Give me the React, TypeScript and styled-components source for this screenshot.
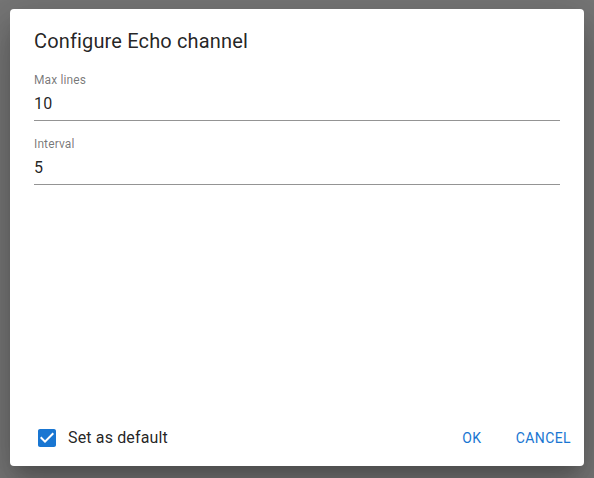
import React, { useState } from "react";
import styled, { createGlobalStyle } from "styled-components";

const Global = createGlobalStyle`
  html, body { margin: 0; padding: 0; }
  body {
    background: #767676;
    font-family: Roboto, "Liberation Sans", Arial, sans-serif;
    -webkit-font-smoothing: antialiased;
  }
  * { box-sizing: border-box; }
`;

const Backdrop = styled.div`
  width: 594px;
  height: 478px;
  padding: 9px 10px 12px 10px;
  display: flex;
`;

const Dialog = styled.div`
  flex: 1;
  background: #fff;
  border-radius: 4px;
  display: flex;
  flex-direction: column;
  box-shadow: 0px 11px 15px -7px rgba(0,0,0,0.2), 0px 24px 38px 3px rgba(0,0,0,0.14), 0px 9px 46px 8px rgba(0,0,0,0.12);
`;

const Title = styled.h2`
  margin: 0;
  padding: 16px 24px 15px;
  font-size: 20px;
  font-weight: 400;
  line-height: 32px;
  color: rgba(0,0,0,0.87);
  letter-spacing: 0.0075em;
`;

const Content = styled.div`
  flex: 1;
  padding: 0 24px;
  display: flex;
  flex-direction: column;
  gap: 15px;
`;

const Field = styled.label`
  display: flex;
  flex-direction: column;
  gap: 3px;
`;

const Label = styled.span`
  font-size: 12px;
  line-height: 16px;
  color: rgba(0,0,0,0.54);
  letter-spacing: 0.00938em;
`;

const Input = styled.input`
  border: none;
  outline: none;
  border-bottom: 1px solid rgba(0,0,0,0.42);
  padding: 0 0 5px;
  margin: 0;
  font-family: inherit;
  font-size: 16px;
  line-height: 24px;
  height: 30px;
  color: rgba(0,0,0,0.87);
  background: transparent;
  letter-spacing: 0.00938em;
`;

const Actions = styled.div`
  display: flex;
  align-items: center;
  padding: 0 5px 7px 16px;
`;

const CheckLabel = styled.label`
  flex: 1;
  display: flex;
  align-items: center;
  font-size: 16px;
  line-height: 24px;
  color: rgba(0,0,0,0.87);
  letter-spacing: 0.00938em;
  cursor: pointer;
`;

const CheckBox = styled.span`
  width: 24px;
  height: 24px;
  padding: 9px;
  box-sizing: content-box;
  display: inline-flex;
  color: #1976d2;
`;

const Button = styled.button`
  min-width: 64px;
  padding: 6px 8px;
  border: none;
  background: transparent;
  font-family: inherit;
  font-size: 14px;
  font-weight: 400;
  line-height: 24px;
  letter-spacing: 0.02857em;
  text-transform: uppercase;
  color: #1976d2;
  border-radius: 4px;
  cursor: pointer;
  & + & { margin-left: 4px; }
`;

export default function App() {
  const [checked, setChecked] = useState(true);
  return (
    <>
      <Global />
      <Backdrop>
        <Dialog>
          <Title>Configure Echo channel</Title>
          <Content>
            <Field>
              <Label>Max lines</Label>
              <Input defaultValue="10" />
            </Field>
            <Field>
              <Label>Interval</Label>
              <Input defaultValue="5" />
            </Field>
          </Content>
          <Actions>
            <CheckLabel onClick={() => setChecked(!checked)}>
              <CheckBox>
                <svg width="24" height="24" viewBox="0 0 24 24" fill="currentColor">
                  {checked ? (
                    <path d="M19 3H5c-1.11 0-2 .9-2 2v14c0 1.1.89 2 2 2h14c1.11 0 2-.9 2-2V5c0-1.1-.89-2-2-2zm-9 14l-5-5 1.41-1.41L10 14.17l7.59-7.59L19 8l-9 9z" />
                  ) : (
                    <path d="M19 5v14H5V5h14m0-2H5c-1.1 0-2 .9-2 2v14c0 1.1.9 2 2 2h14c1.1 0 2-.9 2-2V5c0-1.1-.9-2-2-2z" />
                  )}
                </svg>
              </CheckBox>
              Set as default
            </CheckLabel>
            <Button>OK</Button>
            <Button>Cancel</Button>
          </Actions>
        </Dialog>
      </Backdrop>
    </>
  );
}
